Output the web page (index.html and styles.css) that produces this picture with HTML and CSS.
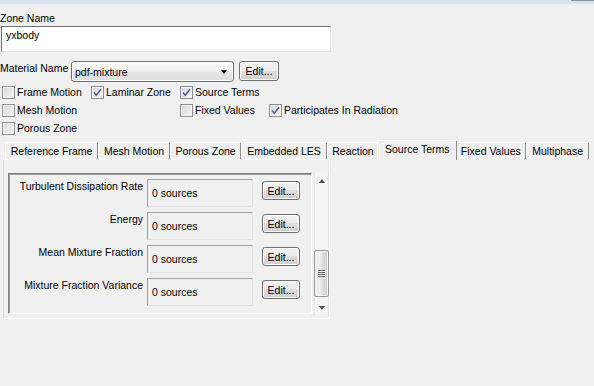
FILE: index.html
```html
<!DOCTYPE html>
<html>
<head>
	<title>Cell Zone Conditions</title>
	<meta content="width=device-width, initial-scale=1" name="viewport">
	<link rel="stylesheet" href="styles.css">
</head>
<body>
<div class="topbar"><span class="corner"></span></div>

<div class="zone-form">
	<div class="field-label">Zone Name</div>
	<div class="text-field">yxbody</div>

	<div class="material-row">
		<span class="material-label">Material Name</span>
		<div class="combo">
			<span>pdf-mixture</span>
			<span class="combo-arrow"></span>
		</div>
		<button class="btn">Edit...</button>
	</div>

	<ul class="options">
		<li><span class="check"></span>Frame Motion</li>
		<li><span class="check"><svg viewBox="0 0 11 11" width="11" height="11"><path d="M2 5.5 L4.3 8.2 L9 2.3"></path></svg></span>Laminar Zone</li>
		<li><span class="check"><svg viewBox="0 0 11 11" width="11" height="11"><path d="M2 5.5 L4.3 8.2 L9 2.3"></path></svg></span>Source Terms</li>
		<li class="empty"></li>
		<li><span class="check"></span>Mesh Motion</li>
		<li class="empty"></li>
		<li><span class="check"></span>Fixed Values</li>
		<li><span class="check"><svg viewBox="0 0 11 11" width="11" height="11"><path d="M2 5.5 L4.3 8.2 L9 2.3"></path></svg></span>Participates In Radiation</li>
		<li><span class="check"></span>Porous Zone</li>
	</ul>
</div>

<ul class="tab-bar">
	<li>Reference Frame</li>
	<li>Mesh Motion</li>
	<li>Porous Zone</li>
	<li>Embedded LES</li>
	<li>Reaction</li>
	<li class="active">Source Terms</li>
	<li>Fixed Values</li>
	<li>Multiphase</li>
</ul>

<div class="tab-panel">
	<div class="scroll-pane">
		<div class="sources">
			<div class="source-row">
				<span class="source-name">Turbulent Dissipation Rate</span>
				<span class="source-box">0 sources</span>
				<button class="btn">Edit...</button>
			</div>
			<div class="source-row">
				<span class="source-name">Energy</span>
				<span class="source-box">0 sources</span>
				<button class="btn">Edit...</button>
			</div>
			<div class="source-row">
				<span class="source-name">Mean Mixture Fraction</span>
				<span class="source-box">0 sources</span>
				<button class="btn">Edit...</button>
			</div>
			<div class="source-row">
				<span class="source-name">Mixture Fraction Variance</span>
				<span class="source-box">0 sources</span>
				<button class="btn">Edit...</button>
			</div>
		</div>
		<div class="scrollbar">
			<span class="arrow"><span class="tri-up"></span></span>
			<span class="track"><span class="thumb"><span class="grip"></span></span></span>
			<span class="arrow"><span class="tri-down"></span></span>
		</div>
	</div>
</div>
</body>
</html>
```

FILE: styles.css
```css
body {
	margin: 0;
	background: #f0f0f0;
	font-family: "Liberation Sans", Arial, sans-serif;
	font-size: 10.5px;
	color: #000;
}

.topbar {
	height: 4px;
	background: #d6e3f1;
	display: flex;
	justify-content: flex-end;
}

.corner {
	width: 23px;
	height: 0;
	border-bottom: 1px solid #8a929c;
}

.zone-form {
	padding-top: 7px;
}

.field-label {
	line-height: 14px;
}

.text-field {
	box-sizing: border-box;
	width: 330px;
	height: 26px;
	margin: 1px 0 0 1px;
	padding: 1px 4px 0;
	line-height: 14px;
	border: 1px solid;
	border-color: #6f6f6f #e3e3e3 #e3e3e3 #6f6f6f;
	background: #fff;
}

.material-row {
	display: flex;
	align-items: flex-start;
	margin-top: 9px;
}

.material-label {
	width: 71px;
	line-height: 14px;
}

.combo {
	box-sizing: border-box;
	width: 163px;
	height: 21px;
	padding: 0 6px 0 3px;
	display: flex;
	align-items: center;
	border: 1px solid #707070;
	border-radius: 3px;
	background: linear-gradient(#fafafa, #efefef 50%, #e4e4e4 51%, #dedede);
	box-shadow: inset 0 0 0 1px #fcfcfc;
}

.combo-arrow {
	margin-left: auto;
	width: 0;
	height: 0;
	border-left: 3.5px solid transparent;
	border-right: 3.5px solid transparent;
	border-top: 4px solid #000;
}

.btn {
	box-sizing: border-box;
	width: 40px;
	height: 20px;
	margin: 0 0 0 5px;
	padding: 0;
	font: inherit;
	color: #000;
	border: 1px solid #707070;
	border-radius: 3px;
	background: linear-gradient(#f2f2f2, #ebebeb 49%, #dddddd 50%, #cfcfcf);
	box-shadow: inset 0 0 0 1px #fbfbfb;
}

.options {
	list-style: none;
	margin: 1px 0 0;
	padding: 0 0 0 2px;
	display: grid;
	grid-template-columns: 89px 89px 89px auto;
	grid-auto-rows: 18px;
}

.options li {
	display: flex;
	align-items: center;
	gap: 2px;
	line-height: 14px;
	white-space: nowrap;
}

.check {
	box-sizing: border-box;
	width: 13px;
	height: 13px;
	flex: none;
	border: 1px solid #8e8f8f;
	background: linear-gradient(135deg, #d4d5d7, #f7f7f7);
	box-shadow: inset 0 0 0 1px #f4f4f4;
}

.check svg {
	display: block;
}

.check path {
	fill: none;
	stroke: #4a5f8c;
	stroke-width: 1.5;
}

.tab-bar {
	list-style: none;
	margin: 3px 0 0;
	padding: 0 0 0 5px;
	display: flex;
	align-items: flex-end;
	white-space: nowrap;
}

.tab-bar li {
	box-sizing: border-box;
	height: 17px;
	padding: 0 4.75px;
	line-height: 16px;
	border-top: 1px solid #fff;
	border-left: 1px solid #fff;
	border-right: 1px solid #8d8d8d;
	border-radius: 2px 2px 0 0;
}

.tab-bar li.active {
	position: relative;
	z-index: 1;
	height: 20px;
	margin: 0 -2px -1px;
	padding: 0 6.5px 2px;
	line-height: 17px;
	background: #f0f0f0;
}

.tab-panel {
	box-sizing: border-box;
	width: 327px;
	height: 160px;
	margin-left: 3px;
	border: 1px solid #fff;
	border-left-color: #d9d9d9;
}

.scroll-pane {
	display: flex;
	align-items: flex-start;
	margin: 13px 0 0 4px;
}

.sources {
	box-sizing: border-box;
	width: 304px;
	height: 141px;
	padding-top: 5px;
	overflow: hidden;
	border: 1px solid;
	border-color: #7a7a7a #fff #fff #7a7a7a;
	box-shadow: inset 1px 1px 0 #a0a0a0;
}

.source-row {
	display: flex;
	align-items: flex-start;
	height: 28px;
	margin-bottom: 5px;
}

.source-name {
	width: 134px;
	text-align: right;
	line-height: 14px;
	white-space: nowrap;
}

.source-box {
	box-sizing: border-box;
	width: 106px;
	height: 28px;
	margin-left: 4px;
	padding-left: 4px;
	display: flex;
	align-items: center;
	border: 1px solid;
	border-color: #a0a0a0 #e3e3e3 #e3e3e3 #a0a0a0;
}

.source-row .btn {
	width: 38px;
	height: 19px;
	margin: 2px 0 0 9px;
}

.scrollbar {
	box-sizing: border-box;
	width: 15px;
	height: 144px;
	margin: -1px 0 0 2px;
	display: flex;
	flex-direction: column;
	background: #f4f4f4;
	box-shadow: inset 1px 0 #e6e6e6, inset -1px 0 #e6e6e6;
}

.arrow {
	height: 17px;
	display: flex;
	align-items: center;
	justify-content: center;
}

.tri-up,
.tri-down {
	width: 0;
	height: 0;
	border-left: 3.5px solid transparent;
	border-right: 3.5px solid transparent;
}

.tri-up {
	border-bottom: 4px solid #505050;
}

.tri-down {
	border-top: 4px solid #505050;
}

.track {
	flex: 1;
	display: flex;
	flex-direction: column;
	justify-content: flex-end;
	padding-bottom: 2px;
}

.thumb {
	box-sizing: border-box;
	height: 47px;
	display: flex;
	align-items: center;
	justify-content: center;
	border: 1px solid #959595;
	border-radius: 2px;
	background: linear-gradient(to right, #e6e6e6, #f3f3f3 30%, #dcdcdc 60%, #cdcdcd);
	box-shadow: inset 0 0 0 1px #f7f7f7;
}

.grip {
	width: 7px;
	height: 7px;
	background: repeating-linear-gradient(#666 0 1px, #fafafa 1px 2px);
}
```
